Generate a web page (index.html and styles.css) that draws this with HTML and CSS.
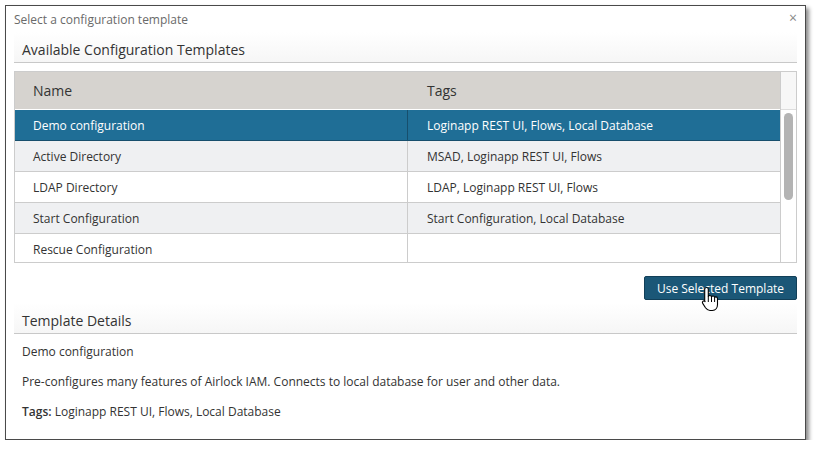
FILE: index.html
```html
<!DOCTYPE html>
<html>
<head>
<meta charset="utf-8">
<link rel="stylesheet" href="styles.css">
</head>
<body>
<div class="dialog">
  <div class="titlebar">
    <span class="title">Select a configuration template</span>
    <span class="close">×</span>
  </div>
  <div class="content">
    <h2 class="section-head">Available Configuration Templates</h2>
    <div class="grid">
      <div class="grid-main">
        <div class="row head">
          <div class="cell c-name">Name</div>
          <div class="cell c-tags">Tags</div>
        </div>
        <div class="grid-body">
          <div class="row selected">
            <div class="cell c-name">Demo configuration</div>
            <div class="cell c-tags">Loginapp REST UI, Flows, Local Database</div>
          </div>
          <div class="row alt">
            <div class="cell c-name">Active Directory</div>
            <div class="cell c-tags">MSAD, Loginapp REST UI, Flows</div>
          </div>
          <div class="row">
            <div class="cell c-name">LDAP Directory</div>
            <div class="cell c-tags">LDAP, Loginapp REST UI, Flows</div>
          </div>
          <div class="row alt">
            <div class="cell c-name">Start Configuration</div>
            <div class="cell c-tags">Start Configuration, Local Database</div>
          </div>
          <div class="row">
            <div class="cell c-name">Rescue Configuration</div>
            <div class="cell c-tags"></div>
          </div>
        </div>
      </div>
      <div class="scroll">
        <div class="scroll-head"></div>
        <div class="scroll-track"><div class="thumb"></div></div>
      </div>
    </div>
    <div class="actions">
      <button class="btn">Use Selected Template</button>
      <svg class="cursor" width="18" height="27" viewBox="0 0 18 27">
        <path d="M5.5 1.5 C6.6 1.5 7.3 2.3 7.3 3.4 L7.3 10.5 C7.6 9.8 8.2 9.5 8.9 9.5 C9.8 9.5 10.4 10.1 10.5 10.9 C10.8 10.3 11.3 10 12 10 C12.9 10 13.5 10.6 13.6 11.5 C13.9 11.1 14.3 10.9 14.9 10.9 C15.9 10.9 16.5 11.7 16.5 12.7 L16.5 18.5 C16.5 21.8 14.6 24.5 11.4 24.5 L9 24.5 C6.8 24.5 5.6 23.4 4.5 21.8 L1.7 17.4 C1.2 16.6 1.3 15.7 2 15.2 C2.7 14.7 3.6 14.9 4.1 15.6 L3.7 15 L3.7 3.4 C3.7 2.3 4.4 1.5 5.5 1.5 Z" fill="#fff" stroke="#000" stroke-width="1.1" stroke-linejoin="round"/>
        <path d="M7.3 10.5 L7.3 16 M10.5 10.9 L10.5 16 M13.6 11.5 L13.6 16" stroke="#000" stroke-width="1" fill="none"/>
      </svg>
    </div>
    <h2 class="section-head">Template Details</h2>
    <div class="details">
      <p>Demo configuration</p>
      <p>Pre-configures many features of Airlock IAM. Connects to local database for user and other data.</p>
      <p><b>Tags:</b> Loginapp REST UI, Flows, Local Database</p>
    </div>
  </div>
</div>
</body>
</html>
```

FILE: styles.css
```css
html, body {
  margin: 0;
  padding: 0;
  background: #fff;
}
body {
  font-family: "Open Sans", "Noto Sans", sans-serif;
  color: #333;
  padding: 5px 0 0 5px;
}
.dialog {
  width: 799px;
  height: 433px;
  border: 1px solid #4a4a4a;
  background: #fff;
  box-shadow: 3px 3px 4px rgba(0, 0, 0, 0.45);
  box-sizing: content-box;
}
.titlebar {
  height: 26px;
  display: flex;
  align-items: center;
  justify-content: space-between;
  padding: 0 8px 0 8px;
}
.title {
  font-size: 12px;
  color: #6a6a6a;
  line-height: 25px;
}
.close {
  font-size: 14px;
  color: #888;
  line-height: 14px;
  margin-top: -3px;
}
.content {
  padding: 0 8px 0 8px;
}
.section-head {
  margin: 0;
  font-weight: normal;
  font-size: 14px;
  line-height: 20px;
  padding: 8px 8px 2px 8px;
  border-bottom: 1px solid #c8c8c8;
  background: linear-gradient(#ffffff, #f6f6f6);
  color: #333;
}
.grid {
  margin-top: 8px;
  border: 1px solid #cccccc;
  display: flex;
  height: 190px;
}
.grid-main {
  flex: 1;
  display: flex;
  flex-direction: column;
  overflow: hidden;
}
.grid-body {
  flex: 1;
  overflow: hidden;
}
.row {
  display: flex;
  height: 30px;
  border-bottom: 1px solid #cccccc;
  font-size: 12px;
  background: #fff;
}
.row.alt {
  background: #eff0f2;
}
.row.selected {
  background: #1f6e96;
  color: #fff;
  border-bottom-color: #174f6d;
}
.row.head {
  height: 37px;
  background: #d6d3cf;
  font-size: 14px;
  color: #333;
  border-bottom: 1px solid #ffffff;
}
.cell {
  display: flex;
  align-items: center;
}
.c-name {
  width: 374px;
  padding-left: 18px;
  border-right: 1px solid #cccccc;
}
.row.selected .c-name {
  border-right-color: #174f6d;
}
.row.head .c-name {
  border-right-color: #d6d3cf;
}
.c-tags {
  flex: 1;
  padding-left: 19px;
}
.scroll {
  width: 15px;
  border-left: 1px solid #cccccc;
  display: flex;
  flex-direction: column;
}
.scroll-head {
  height: 37px;
  background: #f7f7f7;
  border-bottom: 1px solid #dddddd;
}
.scroll-track {
  flex: 1;
  background: #fff;
  padding: 3px 3px 0 3px;
}
.thumb {
  width: 9px;
  height: 87px;
  border-radius: 5px;
  background: #b4b4b4;
}
.actions {
  display: flex;
  justify-content: flex-end;
  position: relative;
  margin-top: 13px;
  margin-bottom: 3px;
}
.btn {
  font-family: "Open Sans", "Noto Sans", sans-serif;
  font-size: 12px;
  color: #fff;
  background: #1b5777;
  border: 1px solid #123f58;
  border-radius: 2px;
  width: 153px;
  height: 24px;
  padding: 0;
}
.cursor {
  position: absolute;
  left: 687px;
  top: 10px;
}
.details {
  padding: 0 8px;
  font-size: 12px;
  color: #333;
}
.details p {
  margin: 0;
  line-height: 18px;
  padding-top: 9px;
  padding-bottom: 3px;
}
.details b {
  font-weight: 600;
}
```
